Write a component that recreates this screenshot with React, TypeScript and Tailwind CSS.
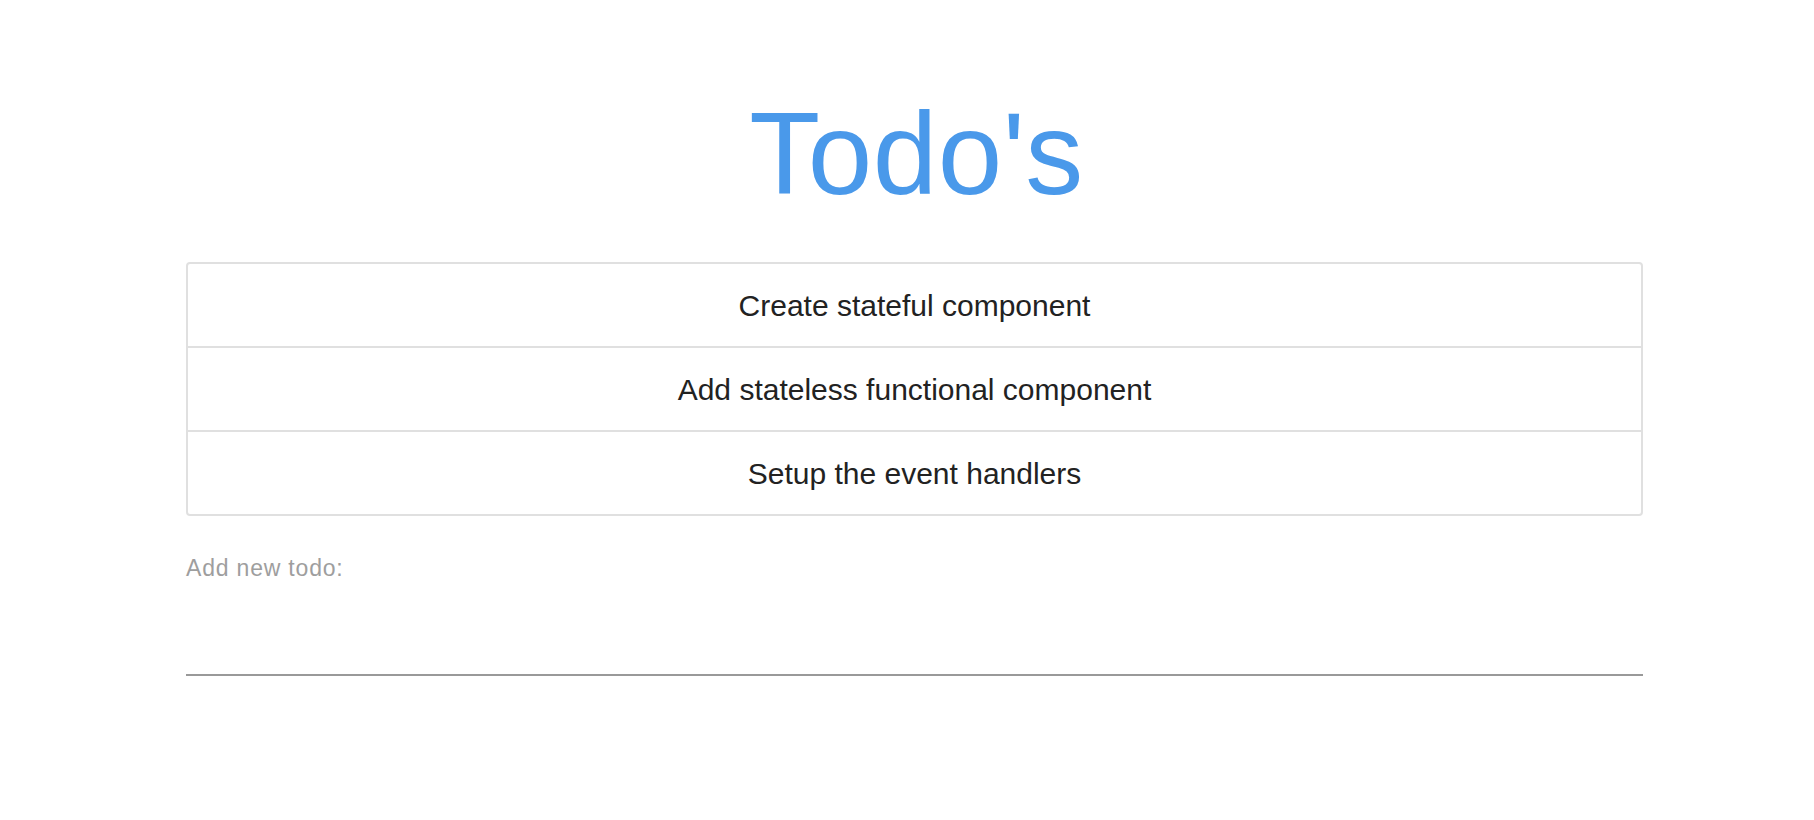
import { useState } from "react";

const INITIAL_TODOS = [
    "Create stateful component",
    "Add stateless functional component",
    "Setup the event handlers",
];

export default function App() {
    const [todos, setTodos] = useState<string[]>(INITIAL_TODOS);
    const [draft, setDraft] = useState("");

    const addTodo = (e: React.FormEvent) => {
        e.preventDefault();
        if (!draft.trim()) return;
        setTodos([...todos, draft.trim()]);
        setDraft("");
    };

    return (
        <div
            className="min-h-screen bg-white pt-[96px]"
            style={{ fontFamily: '"Liberation Sans", Arial, sans-serif' }}
        >
            <div className="ml-[186px] w-[1457px]">
                <h1 className="ml-[4px] text-center text-[116px] leading-none tracking-[0.004em] text-[#4a99ea]">
                    Todo&apos;s
                </h1>

                <ul className="mt-[50px] rounded-[4px] border-2 border-[#e0e0e0]">
                    {todos.map((todo, i) => (
                        <li
                            key={i}
                            className={`flex items-center justify-center text-[30px] text-[#222222] ${
                                i > 0 ? "h-[84px] border-t-2 border-[#e0e0e0]" : "h-[82px]"
                            }`}
                        >
                            {todo}
                        </li>
                    ))}
                </ul>

                <form onSubmit={addTodo} className="mt-[41px]">
                    <label className="block text-[23px] leading-none tracking-[0.035em] text-[#9e9e9e]">
                        Add new todo:
                    </label>
                    <input
                        value={draft}
                        onChange={(e) => setDraft(e.target.value)}
                        className="block h-[96px] w-full border-b-2 border-[#999999] bg-transparent text-[26px] text-[#1f1f1f] outline-none"
                    />
                </form>
            </div>
        </div>
    );
}
